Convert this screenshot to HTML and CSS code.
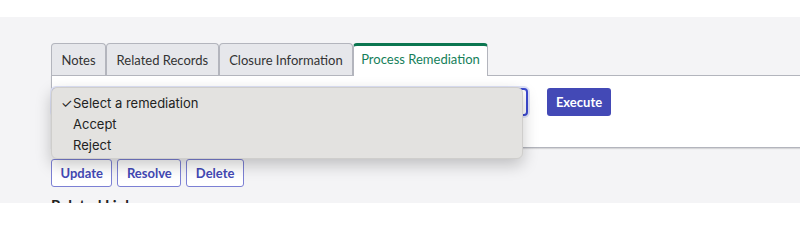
FILE: index.html
```html
<!DOCTYPE html>
<html>
<head>
<meta charset="utf-8">
<link rel="stylesheet" href="styles.css">
</head>
<body>
<div class="page">
  <div class="tabs">
    <div class="tab">Notes</div>
    <div class="tab">Related Records</div>
    <div class="tab">Closure Information</div>
    <div class="tab active">Process Remediation</div>
  </div>
  <div class="panel">
    <div class="controls">
      <div class="select"><span class="arrow"></span></div>
      <button class="btn-primary">Execute</button>
    </div>
  </div>
  <div class="actions">
    <button class="btn-outline">Update</button>
    <button class="btn-outline">Resolve</button>
    <button class="btn-outline">Delete</button>
  </div>
  <h3 class="section-title">Related Links</h3>
  <div class="popup">
    <div class="option selected"><span class="check">✓</span>Select a remediation</div>
    <div class="option"><span class="check"></span>Accept</div>
    <div class="option"><span class="check"></span>Reject</div>
  </div>
</div>
</body>
</html>
```
FILE: styles.css
```css
html, body {
  margin: 0;
  padding: 0;
  background: #ffffff;
  overflow: hidden;
  height: 203px;
}
.page {
  position: relative;
  margin-top: 17px;
  background: #f4f4f6;
  height: 186px;
  padding: 26px 0 0 51px;
  box-sizing: border-box;
  font-family: Lato, "Open Sans", sans-serif;
  font-size: 13px;
  color: #333;
}
.tabs {
  display: flex;
  gap: 0;
  height: 32px;
  position: relative;
  z-index: 1;
}
.tab {
  box-sizing: border-box;
  height: 32px;
  padding: 0 9.5px;
  display: flex;
  align-items: center;
  border: 1px solid #b3b5bd;
  border-bottom: none;
  border-radius: 4px 4px 0 0;
  background: #e6e7eb;
  color: #333;
}
.tab.active {
  background: #ffffff;
  color: #15805a;
  border-top: 3px solid #0b7650;
  height: 33px;
  padding: 0 7px 4px;
}
.panel {
  background: #fff;
  border: 1px solid #b3b5bd;
  border-right: none;
  height: 73px;
  box-sizing: border-box;
  margin-right: -10px;
  box-shadow: 0 1px 1px rgba(0,0,0,0.12);
}
.controls {
  display: flex;
  align-items: center;
  gap: 19px;
  padding: 12px 0 0 0;
}
.select {
  position: relative;
  width: 476px;
  height: 28px;
  box-sizing: border-box;
  border: 2px solid #3c4ad0;
  border-radius: 4px;
  box-shadow: 0 0 0 2px #dfe3f8;
  background: #fff;
}
.arrow {
  position: absolute;
  right: 3px;
  top: 11px;
  width: 3px;
  height: 3px;
  background: #333;
}
.btn-primary {
  height: 28px;
  width: 64px;
  border: none;
  border-radius: 3px;
  background: #4349b6;
  color: #fff;
  font-family: Lato, sans-serif;
  font-weight: 700;
  font-size: 13px;
  padding: 0;
}
.actions {
  display: flex;
  gap: 5px;
  margin-top: 11px;
}
.btn-outline {
  height: 28px;
  box-sizing: border-box;
  padding: 0 8.5px;
  border: 1px solid #7c80d4;
  border-radius: 3px;
  background: #fff;
  color: #4349b6;
  font-family: Lato, sans-serif;
  font-weight: 700;
  font-size: 13px;
}
.section-title {
  margin: 9px 0 0;
  font-size: 15px;
  font-weight: 700;
  color: #222;
}
.popup {
  position: absolute;
  left: 51px;
  top: 70px;
  width: 472px;
  height: 72px;
  box-sizing: border-box;
  background: #e3e2e0;
  border: 1px solid #cfcecc;
  border-radius: 6px;
  box-shadow: 0 6px 16px rgba(0,0,0,0.22);
  padding: 5px 0;
  z-index: 5;
  font-family: Inter, "Liberation Sans", sans-serif;
  font-size: 13px;
  color: #222;
}
.option {
  height: 21px;
  line-height: 21px;
  display: flex;
  align-items: center;
}
.check {
  width: 21px;
  padding-left: 9px;
  box-sizing: border-box;
  font-size: 13px;
}
```
